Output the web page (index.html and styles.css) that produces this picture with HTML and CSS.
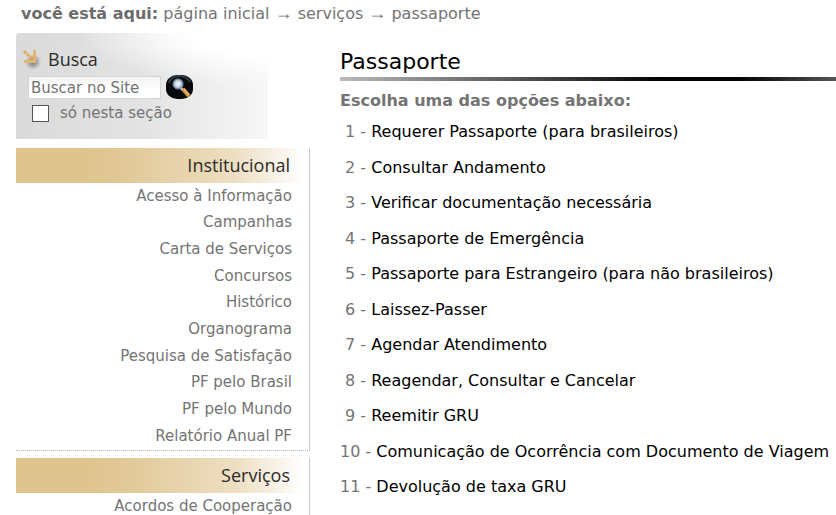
FILE: index.html
```
<!DOCTYPE html>
<html lang="pt-br">
<head>
    <meta charset="UTF-8">
    <meta name="viewport" content="width=device-width, initial-scale=1.0">
    <title>Passaporte</title>
    <link rel="stylesheet" href="styles.css">
</head>
<body>

<nav class="breadcrumbs">
    <strong>você está aqui:</strong>
    <a href="#">página inicial</a> <span class="sep">→</span>
    <a href="#">serviços</a> <span class="sep">→</span>
    <span>passaporte</span>
</nav>

<div class="columns">
    <aside class="sidebar">
        <form class="search">
            <h2>
                <svg class="arrow" width="24" height="24" viewBox="0 0 24 24" aria-hidden="true">
                    <defs>
                        <radialGradient id="shade">
                            <stop offset="0" stop-color="#777"/>
                            <stop offset="0.5" stop-color="#888" stop-opacity="0.6"/>
                            <stop offset="1" stop-color="#ccc" stop-opacity="0"/>
                        </radialGradient>
                    </defs>
                    <circle cx="13" cy="15" r="9" fill="url(#shade)"/>
                    <path d="M4 4L13 13" fill="none" stroke="#dfad60" stroke-width="3" stroke-dasharray="3 1"/>
                    <path d="M13 3H16V16H4V13H13Z" fill="#e2b66f"/>
                </svg>
                Busca
            </h2>
            <div class="search-row">
                <input type="text" class="search-text" placeholder="Buscar no Site" aria-label="Buscar no Site">
                <button type="submit" class="search-button" aria-label="Buscar">
                    <svg width="27" height="24" viewBox="0 0 27 24">
                        <defs>
                            <radialGradient id="lens">
                                <stop offset="0" stop-color="#fff"/>
                                <stop offset="0.6" stop-color="#c5d8ee"/>
                                <stop offset="1" stop-color="#758797"/>
                            </radialGradient>
                        </defs>
                        <rect width="27" height="24" rx="11" ry="10" fill="#07090c"/>
                        <path d="M3 8Q5 1 13 1Q21 1 24 7" fill="none" stroke="#2c4250" stroke-width="2"/>
                        <path d="M15 13L17 15" stroke="#b8bcc0" stroke-width="3"/>
                        <path d="M17 14L23 21" stroke="#d99b48" stroke-width="4"/>
                        <path d="M18 14L23 20" stroke="#f5cf91" stroke-width="1"/>
                        <circle cx="12" cy="9" r="5" fill="url(#lens)" stroke="#8295a8"/>
                    </svg>
                </button>
            </div>
            <label class="only-here"><input type="checkbox"> só nesta seção</label>
        </form>

        <section class="menu">
            <h2>Institucional</h2>
            <ul>
                <li><a href="#">Acesso à Informação</a></li>
                <li><a href="#">Campanhas</a></li>
                <li><a href="#">Carta de Serviços</a></li>
                <li><a href="#">Concursos</a></li>
                <li><a href="#">Histórico</a></li>
                <li><a href="#">Organograma</a></li>
                <li><a href="#">Pesquisa de Satisfação</a></li>
                <li><a href="#">PF pelo Brasil</a></li>
                <li><a href="#">PF pelo Mundo</a></li>
                <li><a href="#">Relatório Anual PF</a></li>
            </ul>
        </section>

        <section class="menu menu-last">
            <h2>Serviços</h2>
            <ul>
                <li><a href="#">Acordos de Cooperação</a></li>
            </ul>
        </section>
    </aside>

    <main class="content">
        <h1>Passaporte</h1>
        <h3>Escolha uma das opções abaixo:</h3>
        <div class="options">
            <p>&nbsp;1 - <a href="#">Requerer Passaporte (para brasileiros)</a></p>
            <p>&nbsp;2 - <a href="#">Consultar Andamento</a></p>
            <p>&nbsp;3 - <a href="#">Verificar documentação necessária</a></p>
            <p>&nbsp;4 - <a href="#">Passaporte de Emergência</a></p>
            <p>&nbsp;5 - <a href="#">Passaporte para Estrangeiro (para não brasileiros)</a></p>
            <p>&nbsp;6 - <a href="#">Laissez-Passer</a></p>
            <p>&nbsp;7 - <a href="#">Agendar Atendimento</a></p>
            <p>&nbsp;8 - <a href="#">Reagendar, Consultar e Cancelar</a></p>
            <p>&nbsp;9 - <a href="#">Reemitir GRU</a></p>
            <p>10 - <a href="#">Comunicação de Ocorrência com Documento de Viagem</a></p>
            <p>11 - <a href="#">Devolução de taxa GRU</a></p>
        </div>
    </main>
</div>

</body>
</html>
```
FILE: styles.css
```
* {
    box-sizing: border-box;
}

body {
    margin: 0;
    min-height: 100vh;
    display: flex;
    flex-direction: column;
    background: #fff;
    color: #747474;
    font-family: Verdana, "DejaVu Sans", sans-serif;
    font-size: 16px;
}

a {
    color: inherit;
    text-decoration: none;
}

h1, h2, h3, p, ul {
    margin: 0;
    padding: 0;
    font-weight: normal;
}

.breadcrumbs {
    padding: 2px 21px 7px;
    line-height: 24px;
}

.breadcrumbs strong {
    color: #6c6c6c;
}

.breadcrumbs .sep {
    font-family: "Liberation Sans", sans-serif;
    font-size: 18px;
    line-height: 18px;
}

.columns {
    flex: 1;
    display: flex;
    gap: 30px;
    padding-left: 16px;
}

.sidebar {
    flex: 0 0 294px;
    display: flex;
    flex-direction: column;
}

.sidebar h2 {
    color: #2b2b2b;
    font-family: "Trebuchet MS", "Open Sans", sans-serif;
    font-size: 18px;
}

/* search box */
.search {
    height: 106px;
    margin: 0 42px 9px 0;
    padding: 13px 12px 0;
    border-top-left-radius: 4px;
    background:
        radial-gradient(ellipse 190px 54px at 100% 0, #fff 40%, rgba(255, 255, 255, 0) 100%),
        linear-gradient(to right, #dadada, #e3e3e3 50%, #f7f7f7);
}

.search h2 {
    display: flex;
    align-items: center;
    gap: 4px;
    margin-left: -8px;
    line-height: 26px;
}

.search-row {
    display: flex;
    align-items: center;
    gap: 5px;
    margin-top: 3px;
}

.search-text {
    width: 133px;
    height: 23px;
    padding: 1px 2px 0;
    border: 1px solid #d5d5d5;
    background: linear-gradient(#f3f3f3, #fff 60%);
    color: #747474;
    font-family: inherit;
    font-size: 15px;
}

.search-text::placeholder {
    color: #747474;
}

.search-button {
    display: flex;
    padding: 0;
    border: 0;
    background: none;
}

.only-here {
    display: flex;
    align-items: center;
    gap: 11px;
    margin-top: 1px;
    font-size: 15px;
    line-height: 27px;
}

.only-here input {
    appearance: none;
    width: 17px;
    height: 17px;
    margin: 0 0 0 4px;
    border: 1px solid #555;
    background: #fff;
}

/* menus */
.menu {
    margin-bottom: 7px;
    border-right: 1px solid #ccc;
    border-bottom: 1px dotted #bbb;
    text-align: right;
    font-size: 15px;
}

.menu h2 {
    padding-right: 19px;
    background: linear-gradient(to right, #dfc58d 24%, #e1c795 35%, #eddfc2 75%, #fff 98%);
    line-height: 35px;
}

.menu ul {
    padding: 0 17px 1px 0;
    list-style: none;
}

.menu li {
    line-height: 27px;
}

.menu li:nth-child(3n+1) {
    line-height: 26px;
}

.menu-last {
    flex: 1;
    margin-bottom: 0;
    border-bottom: 0;
}

.menu-last ul {
    height: 22px;
}

/* main column */
.content {
    flex: 1;
    min-width: 0;
    padding-top: 14px;
}

.content h1 {
    padding-bottom: 4px;
    background: linear-gradient(to right, #bbb, #000 65%, #000 80%, #555) bottom / 100% 4px no-repeat;
    color: #000;
    font-size: 22px;
    line-height: 30px;
}

.content h3 {
    margin-top: 8px;
    color: #747474;
    font-size: 16px;
    font-weight: bold;
    line-height: 24px;
}

.options {
    padding-top: 7px;
}

.options p {
    margin-bottom: 12px;
    line-height: 24px;
}

.options p:nth-child(even) {
    margin-bottom: 11px;
}

.options p:last-child {
    margin-bottom: 0;
}

.options a {
    color: #000;
}
```
